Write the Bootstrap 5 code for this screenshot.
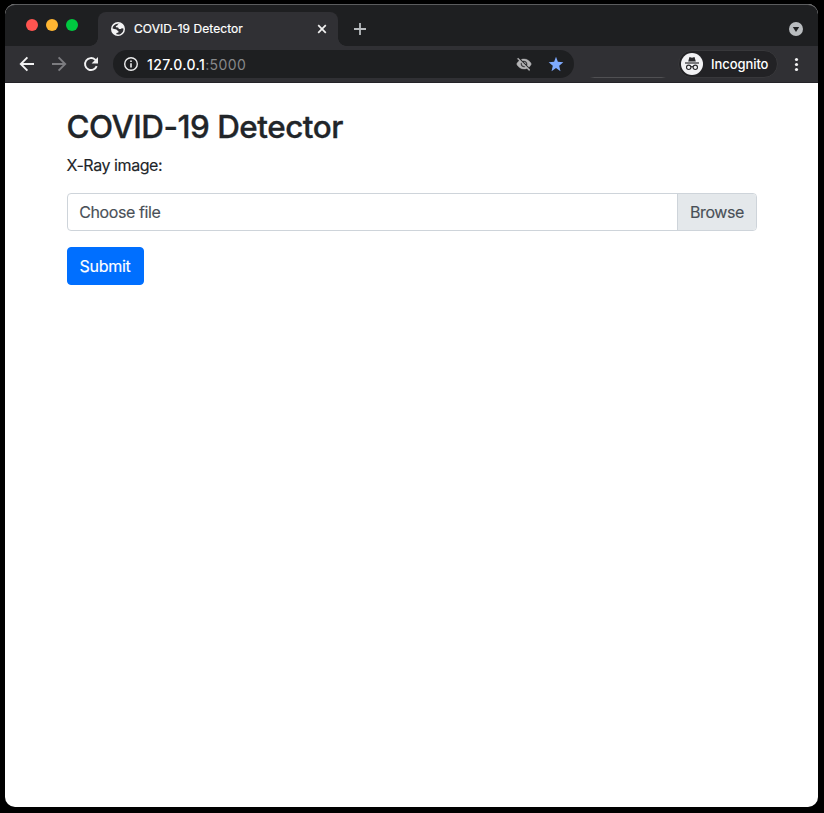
<!DOCTYPE html>
<html lang="en">
<head>
<meta charset="utf-8">
<title>COVID-19 Detector</title>
<link href="https://cdn.jsdelivr.net/npm/bootstrap@5.3.0/dist/css/bootstrap.min.css" rel="stylesheet">
<style>
body{background:#000;font-family:Inter,"Liberation Sans",sans-serif;color:#212529;height:100vh;overflow:hidden;padding:4px 6px 6px 5px}
svg{display:block;flex:none}
.window{height:803px;border-radius:10px;background:#fff}
.tabstrip{height:42px;background:#1e1f21;border-top:1px solid #5b5c5e;border-radius:10px 10px 0 0;padding-left:21px;padding-right:15px}
.light{width:12px;height:12px;border-radius:50%}
.lights{gap:8px;padding-top:14px;width:72px}
.red{background:#ff5450}.yellow{background:#ffb632}.green{background:#00c840}
.page-tab{position:relative;width:240px;height:34px;margin-top:7px;background:#303034;border-radius:8px 8px 0 0;padding:0 10px 0 13px;color:#fff;font-size:12px}
.page-tab::before,.page-tab::after{content:"";position:absolute;bottom:0;width:8px;height:8px}
.page-tab::before{left:-8px;background:radial-gradient(circle at 0 0,transparent 7.5px,#303034 8px)}
.page-tab::after{right:-8px;background:radial-gradient(circle at 100% 0,transparent 7.5px,#303034 8px)}
.tab-title{letter-spacing:.07px;margin-left:9px;-webkit-text-stroke:.2px}
.toolbar{height:37px;background:#303034;border-bottom:1px solid #242328;padding-left:13px;padding-right:13px}
.nav-icons{gap:14px;width:95px}
.address{width:461px;height:28px;border-radius:14px;background:#1e1f21;padding:0 10px;font-size:14px;color:#fff}
.port{color:#87888a}
.url{letter-spacing:.4px;margin-left:8px;font-weight:500}
.url .port{font-weight:400}
.faint{width:76px;height:1px;margin:27px 12px 0 16px;background:linear-gradient(90deg,transparent,#505053 6%,#505053 94%,transparent)}
.profile{width:100px;height:28px;border-radius:14px;background:#222225;border:1px solid #38383b;color:#fff;font-size:13px;font-weight:500;padding-left:2px}
.profile span{margin-left:8px;padding-top:2px;letter-spacing:-.07px}
.content-area{padding:24px 61px 0 62px}
h1{font-size:31.4px;font-weight:500;line-height:38.4px;letter-spacing:-.48px;padding-top:1px;margin:0 0 7px -.6px;-webkit-text-stroke:.35px}
.field-label{line-height:24px;margin:0 0 16px -.5px;letter-spacing:-.43px;-webkit-text-stroke:.15px}
.picker{height:38px;width:690px;border:1px solid #ced4da;border-radius:4px;color:#495057;letter-spacing:-.4px;cursor:pointer;-webkit-text-stroke:.15px}
.picker-name{padding-left:11.2px}
.picker-browse{width:79px;background:#e4e8eb;border-left:1px solid #ced4da;border-radius:0 3px 3px 0}
.btn-submit{--bs-btn-bg:#006fff;--bs-btn-border-color:#006fff;--bs-btn-border-radius:4px;width:77px;height:38px;padding:0 1px 0 0;letter-spacing:-.25px;-webkit-text-stroke:.15px}
</style>
<script src="https://cdn.jsdelivr.net/npm/bootstrap@5.3.0/dist/js/bootstrap.bundle.min.js"></script>
</head>
<body>
<div class="window">
  <header>
    <div class="tabstrip d-flex">
      <div class="lights d-flex"><i class="light red"></i><i class="light yellow"></i><i class="light green"></i></div>
      <div class="page-tab d-flex align-items-center">
        <svg width="14" height="14" viewBox="0 0 14 14"><circle cx="7" cy="7" r="7" fill="#f4f4f5"/><path d="M8.7 1.6C7.2 1.8 6.6 2.6 6.3 3.5L4.8 4 5 5.3 7 5.5C7.6 5.8 7.4 6.7 8.2 6.9H9.8L10.8 6.2 12.4 6.4C12.8 9.4 10.6 12.2 7.4 12.5L5.4 12.2V11L7.4 10.4V9L6.3 8.5C5.8 7.6 5.2 7.4 4.2 7.3L1.6 6.6C1.5 4.4 4 1.4 8.7 1.6Z" fill="#303034"/></svg>
        <span class="tab-title text-nowrap">COVID-19 Detector</span>
        <svg class="ms-auto" width="12" height="12" viewBox="0 0 12 12"><path d="M2.2 2.2l7.6 7.6m0-7.6L2.2 9.8" stroke="#f1f1f1" stroke-width="1.7"/></svg>
      </div>
      <svg style="margin:18px 0 0 16px" width="12" height="12" viewBox="0 0 12 12"><path d="M6 0v12M0 6h12" stroke="#b9bcbf" stroke-width="1.8"/></svg>
      <svg class="ms-auto" style="margin-top:17px" width="14" height="14" viewBox="0 0 14 14"><circle cx="7" cy="7" r="7" fill="#b9bcbf"/><path d="M3.8 5h6.4L7 10z" fill="#1e1f21"/></svg>
    </div>
    <div class="toolbar d-flex align-items-center">
      <div class="nav-icons d-flex">
        <svg width="18" height="18" viewBox="0 0 18 18"><path d="M16 9H3m6.4-6.6L2.8 9l6.6 6.6" fill="none" stroke="#f2f2f3" stroke-width="1.9"/></svg>
        <svg width="18" height="18" viewBox="0 0 18 18"><path d="M2 9h13M8.6 2.4L15.2 9l-6.6 6.6" fill="none" stroke="#7c7c80" stroke-width="1.9"/></svg>
        <svg width="18" height="18" viewBox="0 0 18 18"><path d="M14.7 11.1A6 6 0 1 1 13.2 4.7L14.2 5.7" fill="none" stroke="#f2f2f3" stroke-width="1.9"/><path d="M16 2v6.4H9.6z" fill="#f2f2f3"/></svg>
      </div>
      <div class="address d-flex align-items-center">
        <svg width="16" height="16" viewBox="0 0 16 16"><circle cx="8" cy="8" r="6.3" fill="none" stroke="#ececed" stroke-width="1.4"/><path d="M8 7.2v4.2M8 4.4v1.6" stroke="#ececed" stroke-width="1.6"/></svg>
        <span class="url">127.0.0.1<span class="port">:5000</span></span>
        <svg class="ms-auto" width="16" height="16" viewBox="0 0 24 24"><path fill="#b4b4b5" stroke="#b4b4b5" stroke-width=".6" d="M12 7c2.76 0 5 2.24 5 5 0 .65-.13 1.26-.36 1.83l2.92 2.92c1.51-1.26 2.7-2.89 3.43-4.75-1.73-4.39-6-7.5-11-7.5-1.4 0-2.74.25-3.98.7l2.16 2.16C10.74 7.13 11.35 7 12 7zM2 4.27l2.28 2.28.46.46C3.08 8.3 1.78 10.02 1 12c1.73 4.39 6 7.5 11 7.5 1.55 0 3.03-.3 4.38-.84l.42.42L19.73 22 21 20.73 3.27 3 2 4.27zM7.53 9.8l1.55 1.55c-.05.21-.08.43-.08.65 0 1.66 1.34 3 3 3 .22 0 .44-.03.65-.08l1.55 1.55c-.67.33-1.41.53-2.2.53-2.76 0-5-2.24-5-5 0-.79.2-1.53.53-2.2zm4.31-.78l3.15 3.15.02-.16c0-1.66-1.34-3-3-3l-.17.01z"/></svg>
        <svg style="margin-left:16px" width="16" height="16" viewBox="0 0 24 24"><path fill="#7eaaff" d="M12 18L18.7 22.8l-1.9-8.2L23 9.3l-8.2-.7L12 1 9.2 8.6 1 9.3l6.2 5.3L5.3 22.8z"/></svg>
      </div>
      <div class="faint"></div>
      <div class="profile d-flex align-items-center">
        <svg width="22" height="22" viewBox="0 0 22 22"><circle cx="11" cy="11" r="11" fill="#f2f2f4"/><path d="M7.2 8.6L8.4 4.3Q8.7 4 9.2 4.2L11 4.7l1.8-.5q.6-.2.8.1l1.2 4.3z" fill="#29292c"/><path d="M4 10h14" stroke="#29292c" stroke-width="1.2"/><g fill="none" stroke="#29292c" stroke-width="1.1"><circle cx="7.7" cy="14.3" r="2.2"/><circle cx="14.3" cy="14.3" r="2.2"/><path d="M9.8 14q1.2-.8 2.4 0"/></g></svg>
        <span>Incognito</span>
      </div>
      <svg class="ms-auto" width="18" height="18" viewBox="0 0 18 18"><g fill="#f2f2f3"><circle cx="9.5" cy="4.5" r="1.6"/><circle cx="9.5" cy="9.5" r="1.6"/><circle cx="9.5" cy="14.5" r="1.6"/></g></svg>
    </div>
  </header>
  <main class="content-area">
    <h1>COVID-19 Detector</h1>
    <form>
      <p class="field-label">X-Ray image:</p>
      <label class="picker d-flex align-items-stretch mb-3">
        <span class="picker-name flex-grow-1 d-flex align-items-center">Choose file</span>
        <span class="picker-browse d-flex align-items-center justify-content-center">Browse</span>
      </label>
      <button type="button" class="btn btn-primary btn-submit">Submit</button>
    </form>
  </main>
</div>
</body>
</html>
